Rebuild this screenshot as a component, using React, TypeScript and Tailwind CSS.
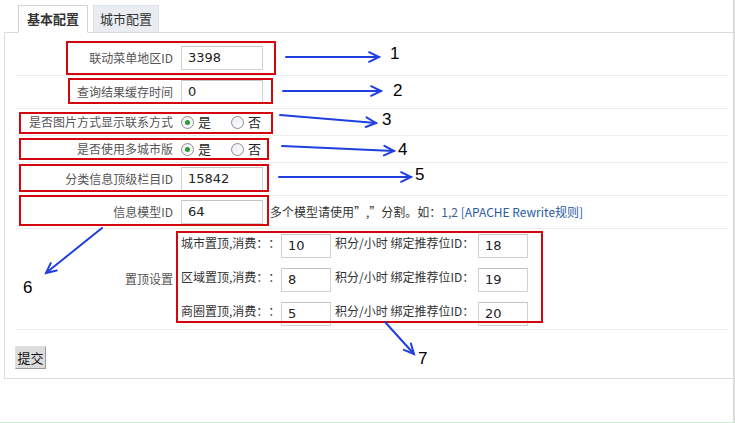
const cjk = "font-['Noto_Sans_CJK_SC','Noto_Sans',sans-serif]";

function Field({ value, w = 'w-[82px]' }: { value: string; w?: string }) {
  return (
    <div className={`${w} h-[24px] border border-[#d2d2d2] border-t-[#c4c4c4] bg-white pl-[6px] flex items-center text-[13px] text-[#222] font-['DejaVu_Sans',sans-serif]`}>
      {value}
    </div>
  );
}

function Radio({ checked }: { checked?: boolean }) {
  return (
    <span className="w-[13px] h-[13px] rounded-full border border-[#8a8f96] bg-gradient-to-br from-[#e9ecef] to-white flex items-center justify-center">
      {checked && <span className="w-[5px] h-[5px] rounded-full bg-[#2e9b3a]" />}
    </span>
  );
}

function Row({ label, h, children, last }: { label: string; h: string; children: React.ReactNode; last?: boolean }) {
  return (
    <div className={`flex items-center ${h} ${last ? '' : 'border-b border-[#ececec]'}`}>
      <div className="w-[158px] text-right text-[12px] text-[#555]">{label}</div>
      <div className="pl-[8px] flex items-center">{children}</div>
    </div>
  );
}

function YesNo() {
  return (
    <div className="flex items-center text-[13px] text-[#222]">
      <Radio checked />
      <span className="ml-[4px]">是</span>
      <span className="ml-[20px]"><Radio /></span>
      <span className="ml-[4px]">否</span>
    </div>
  );
}

const tops = [
  { name: '城市置顶,消费：：', cost: '10', pos: '18' },
  { name: '区域置顶,消费：：', cost: '8', pos: '19' },
  { name: '商圈置顶,消费：：', cost: '5', pos: '20' },
];

// annotation frames and arrows drawn over the form
const frames = [
  'left-[66px] top-[41px] w-[210px] h-[34px]',
  'left-[68px] top-[78px] w-[205px] h-[26px]',
  'left-[19px] top-[112px] w-[254px] h-[22px]',
  'left-[19px] top-[138px] w-[250px] h-[22px]',
  'left-[19px] top-[164px] w-[250px] h-[28px]',
  'left-[19px] top-[195px] w-[250px] h-[31px]',
  'left-[176px] top-[231px] w-[367px] h-[92px]',
];

const arrows: [number, number, number, number][] = [
  [286, 57, 379, 57],
  [283, 91, 381, 91],
  [280, 115, 376, 123],
  [282, 146, 394, 151],
  [279, 177, 411, 177],
  [102, 228, 46, 273],
  [385, 322, 414, 354],
];

const marks = [
  { n: '1', c: 'left-[390px] top-[45px]' },
  { n: '2', c: 'left-[393px] top-[82px]' },
  { n: '3', c: 'left-[382px] top-[111px]' },
  { n: '4', c: 'left-[398px] top-[141px]' },
  { n: '5', c: 'left-[415px] top-[166px]' },
  { n: '6', c: 'left-[23px] top-[279px]' },
  { n: '7', c: 'left-[418px] top-[350px]' },
];

function head(x1: number, y1: number, x2: number, y2: number) {
  const a = Math.atan2(y2 - y1, x2 - x1);
  const L = 11;
  const s = 0.45;
  const p1 = [x2 - L * Math.cos(a - s), y2 - L * Math.sin(a - s)];
  const p2 = [x2 - L * Math.cos(a + s), y2 - L * Math.sin(a + s)];
  return `M${p1[0]},${p1[1]} L${x2},${y2} L${p2[0]},${p2[1]}`;
}

export default function App() {
  return (
    <div className={`relative w-[735px] h-[423px] bg-white border-r-2 border-r-[#dcdcdc] border-b border-b-[#cdeed4] overflow-hidden [text-spacing-trim:space-all] ${cjk}`}>
      {/* Tabs */}
      <div className="flex items-end pl-[18px] pt-[5px] gap-[5px]">
        <div className="h-[28px] w-[70px] -mb-px border border-[#d4d4d4] border-b-white bg-white flex items-center justify-center text-[13px] font-bold text-[#333] relative z-10">
          基本配置
        </div>
        <div className="h-[27px] w-[66px] border border-[#dfe3e8] border-b-0 bg-[#e9edf2] flex items-center justify-center text-[13px] text-[#333]">
          城市配置
        </div>
      </div>

      {/* Panel */}
      <div className="ml-[4px] border border-[#dcdcdc] border-r-0 pt-[8px] pl-[10px] pr-[5px]">
        <Row label="联动菜单地区ID" h="h-[35px]">
          <Field value="3398" />
        </Row>
        <Row label="查询结果缓存时间" h="h-[33px]">
          <Field value="0" />
        </Row>
        <Row label="是否图片方式显示联系方式" h="h-[27px]">
          <YesNo />
        </Row>
        <Row label="是否使用多城市版" h="h-[27px]">
          <YesNo />
        </Row>
        <Row label="分类信息顶级栏目ID" h="h-[33px]">
          <Field value="15842" />
        </Row>
        <Row label="信息模型ID" h="h-[33px]">
          <Field value="64" />
          <span className="ml-[7px] text-[12px] text-[#333] whitespace-nowrap">
            多个模型请使用”,”分割。如：<span className="text-[#3a5f8f]">1,2</span>{' '}
            <span className="text-[#2a5aa6]">[APACHE Rewrite规则]</span>
          </span>
        </Row>
        <div className="flex h-[101px] border-b border-[#ececec]">
          <div className="w-[158px] text-right text-[12px] text-[#555] self-center">置顶设置</div>
          <div className="pl-[8px] pt-[5px] flex flex-col gap-[10px]">
            {tops.map((t) => (
              <div key={t.name} className="flex items-start text-[12px] text-[#333]">
                <span className="w-[100px] leading-[18px] whitespace-nowrap">{t.name}</span>
                <Field value={t.cost} w="w-[50px] h-[23px]" />
                <span className="ml-[4px] w-[143px] leading-[18px] whitespace-nowrap">积分/小时 绑定推荐位ID：</span>
                <Field value={t.pos} w="w-[50px] h-[23px]" />
              </div>
            ))}
          </div>
        </div>
        <div className="h-[48px] pt-[14px]">
          <button className="h-[23px] w-[31px] border border-[#9a9a9a] border-t-[#e0e0e0] border-l-[#e0e0e0] bg-[#dcdcdc] text-[13px] text-[#111] leading-none">
            提交
          </button>
        </div>
      </div>

      {/* Annotations */}
      {frames.map((f) => (
        <div key={f} className={`absolute ${f} border-2 border-[#d4070f]`} />
      ))}
      <svg className="absolute left-0 top-0 w-[735px] h-[423px] pointer-events-none" viewBox="0 0 735 423">
        {arrows.map(([x1, y1, x2, y2], i) => (
          <g key={i} stroke="#1f3fe0" strokeWidth="2" fill="none" strokeLinecap="round">
            <line x1={x1} y1={y1} x2={x2} y2={y2} />
            <path d={head(x1, y1, x2, y2)} />
          </g>
        ))}
      </svg>
      {marks.map((m) => (
        <span key={m.n} className={`absolute ${m.c} text-[17px] leading-none text-black font-['Liberation_Sans',sans-serif]`}>
          {m.n}
        </span>
      ))}
    </div>
  );
}
